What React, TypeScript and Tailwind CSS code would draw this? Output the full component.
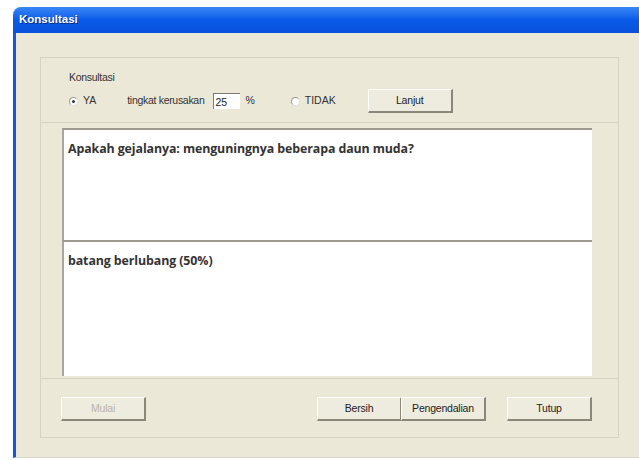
import React, { useState } from "react";

const ui = { fontFamily: '"Liberation Sans", Arial, sans-serif' };

// Classic raised push button
const Button: React.FC<{ label: string; disabled?: boolean; className?: string }> = ({
  label,
  disabled,
  className = "",
}) => (
  <button
    disabled={disabled}
    className={`h-[24px] w-[85px] border-t border-l border-t-white border-l-white border-r-2 border-b-2 border-r-[#8a877a] border-b-[#8a877a] bg-[#eeebdf] text-[10.5px] tracking-[-0.2px] ${
      disabled ? "text-[#b8b5a8]" : "text-[#222]"
    } ${className}`}
    style={ui}
  >
    {label}
  </button>
);

const Radio: React.FC<{ checked: boolean; onClick: () => void; label: string }> = ({
  checked,
  onClick,
  label,
}) => (
  <label className="flex items-center gap-[5px] cursor-pointer" onClick={onClick}>
    <span className="flex h-[9px] w-[9px] items-center justify-center rounded-full border border-[#9a9a9a] border-b-[#e0e0e0] border-r-[#e0e0e0] bg-white">
      {checked && <span className="h-[3px] w-[3px] rounded-full bg-[#333]" />}
    </span>
    <span className="text-[10.5px] text-[#333]">{label}</span>
  </label>
);

const TextArea: React.FC<{ text: string; className?: string }> = ({ text, className = "" }) => (
  <div
    className={`border-t-2 border-l-2 border-t-[#9c9a90] border-l-[#a8a69c] bg-white px-[4px] pt-[10px] ${className}`}
  >
    <p
      className="text-[12.4px] font-bold text-[#333] tracking-[-0.1px]"
      style={{ fontFamily: '"Open Sans", "Noto Sans", sans-serif' }}
    >
      {text}
    </p>
  </div>
);

export default function App() {
  const [ya, setYa] = useState(true);
  const [level, setLevel] = useState("25");

  return (
    <div className="h-[460px] w-[639px] overflow-hidden bg-white pl-[13px] pt-[7px]" style={ui}>
      <div className="flex h-[451px] flex-col">
        {/* title bar */}
        <div className="flex h-[26px] items-center rounded-tl-[8px] bg-gradient-to-b from-[#3a86f7] via-[#0a5ae8] to-[#0752dc] pl-[6px]">
          <span className="text-[11.5px] font-bold text-white [text-shadow:1px_1px_0_#0a2a80]">
            Konsultasi
          </span>
        </div>

        {/* window body */}
        <div className="flex flex-1 flex-col border-l-[3px] border-l-[#1558e0] border-b border-b-[#d8d5c8] bg-[#ebe8d8] pl-[24px] pr-[20px] pt-[24px]">
          {/* options group */}
          <div className="flex h-[66px] flex-col border border-[#d6d3c2] pl-[28px] pt-[12px]">
            <span className="text-[10.5px] tracking-[-0.3px] text-[#333]">Konsultasi</span>
            <div className="mt-[4px] flex h-[23px] items-center">
              <Radio checked={ya} onClick={() => setYa(true)} label="YA" />
              <span className="ml-[31px] text-[10.5px] tracking-[-0.3px] text-[#333]">
                tingkat kerusakan
              </span>
              <input
                value={level}
                onChange={(e) => setLevel(e.target.value)}
                className="ml-[9px] h-[16px] w-[27px] border-t border-l border-t-[#7f7d72] border-l-[#7f7d72] bg-white px-[1px] text-[10.5px] text-[#222] outline-none"
                style={ui}
              />
              <span className="ml-[5px] text-[10.5px] text-[#333]">%</span>
              <div className="ml-[36px]">
                <Radio checked={!ya} onClick={() => setYa(false)} label="TIDAK" />
              </div>
              <Button label="Lanjut" className="ml-[32px]" />
            </div>
          </div>

          {/* answer area */}
          <div className="flex h-[315px] flex-col border border-t-0 border-[#d6d3c2]">
            <div className="flex flex-col pl-[21px] pr-[26px] pt-[5px]">
              <TextArea text="Apakah gejalanya: menguningnya beberapa daun muda?" className="h-[112px]" />
              <TextArea text="batang berlubang (50%)" className="h-[136px]" />
            </div>
            <div className="mt-[2px] border-t border-[#d6d3c2]" />
            <div className="flex items-center pl-[20px] pt-[18px]">
              <Button label="Mulai" disabled />
              <Button label="Bersih" className="ml-[171px]" />
              <Button label="Pengendalian" className="ml-[-1px]" />
              <Button label="Tutup" className="ml-[21px]" />
            </div>
          </div>
        </div>
      </div>
    </div>
  );
}
